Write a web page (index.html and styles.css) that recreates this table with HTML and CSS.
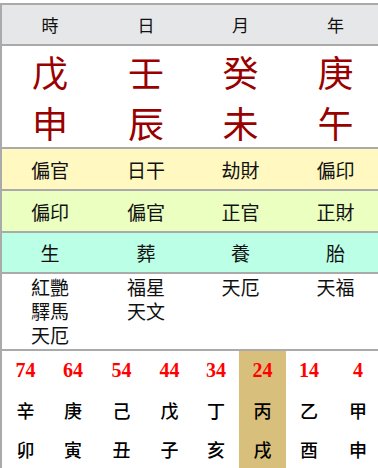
FILE: index.html
```html
<!DOCTYPE html>
<html lang="zh-Hant">
<head>
<meta charset="utf-8">
<link rel="stylesheet" href="styles.css">
</head>
<body>
<div class="chart">
  <div class="row head">
    <div class="cell">時</div><div class="cell">日</div><div class="cell">月</div><div class="cell">年</div>
  </div>
  <div class="row pillars">
    <div class="cell">戊</div><div class="cell">壬</div><div class="cell">癸</div><div class="cell">庚</div>
    <div class="cell">申</div><div class="cell">辰</div><div class="cell">未</div><div class="cell">午</div>
  </div>
  <div class="row gods stem-gods">
    <div class="cell">偏官</div><div class="cell">日干</div><div class="cell">劫財</div><div class="cell">偏印</div>
  </div>
  <div class="row gods branch-gods">
    <div class="cell">偏印</div><div class="cell">偏官</div><div class="cell">正官</div><div class="cell">正財</div>
  </div>
  <div class="row gods stages">
    <div class="cell">生</div><div class="cell">葬</div><div class="cell">養</div><div class="cell">胎</div>
  </div>
  <div class="row stars">
    <div class="cell">紅艷<br>驛馬<br>天厄</div>
    <div class="cell">福星<br>天文</div>
    <div class="cell">天厄</div>
    <div class="cell">天福</div>
  </div>
  <div class="luck">
    <div class="lcol"><span class="age">74</span><span class="gz">辛</span><span class="gz">卯</span></div>
    <div class="lcol"><span class="age">64</span><span class="gz">庚</span><span class="gz">寅</span></div>
    <div class="lcol"><span class="age">54</span><span class="gz">己</span><span class="gz">丑</span></div>
    <div class="lcol"><span class="age">44</span><span class="gz">戊</span><span class="gz">子</span></div>
    <div class="lcol"><span class="age">34</span><span class="gz">丁</span><span class="gz">亥</span></div>
    <div class="lcol current"><span class="age">24</span><span class="gz">丙</span><span class="gz">戌</span></div>
    <div class="lcol"><span class="age">14</span><span class="gz">乙</span><span class="gz">酉</span></div>
    <div class="lcol"><span class="age">4</span><span class="gz">甲</span><span class="gz">申</span></div>
  </div>
</div>
</body>
</html>
```
FILE: styles.css
```css
html, body {
  margin: 0;
  padding: 0;
  overflow: hidden;
  background: #fff;
}
body {
  padding-top: 3px;
  font-family: "Noto Sans CJK TC", "Noto Sans CJK SC", sans-serif;
  color: #111;
}
.chart {
  width: 382px;
  border-left: 2px solid #aaa;
  border-top: 2px solid #aaa;
}
.row {
  display: grid;
  grid-template-columns: 96px 96px 93px 1fr;
  border-bottom: 2px solid #aaa;
}
.cell {
  display: flex;
  align-items: center;
  justify-content: center;
  text-align: center;
}
.head {
  background: #e6e7e9;
  height: 39px;
  font-size: 17px;
}
.pillars {
  height: 101px;
  grid-template-rows: 50px 51px;
  font-size: 36px;
  color: #990000;
}
.gods {
  font-size: 19px;
}
.stem-gods {
  background: #fff8c0;
  height: 40px;
}
.branch-gods {
  background: #eaffc0;
  height: 40px;
}
.stages {
  background: #bbffe6;
  height: 39px;
}
.stars {
  height: 75px;
  font-size: 19px;
  line-height: 24px;
}
.stars .cell {
  align-items: flex-start;
  padding-top: 1px;
}
.luck {
  display: grid;
  grid-template-columns: 47px 48px 49px 47px 46px 47px 46px 1fr;
  height: 130px;
}
.lcol {
  display: grid;
  grid-template-rows: 39px 39px 39px;
  align-items: center;
  justify-items: center;
}
.lcol.current {
  background: #d9bf7c;
}
.age {
  font-family: "Liberation Serif", serif;
  font-weight: bold;
  font-size: 20px;
  color: #ff0000;
}
.gz {
  font-size: 18px;
  font-weight: 500;
  color: #000;
}
```
